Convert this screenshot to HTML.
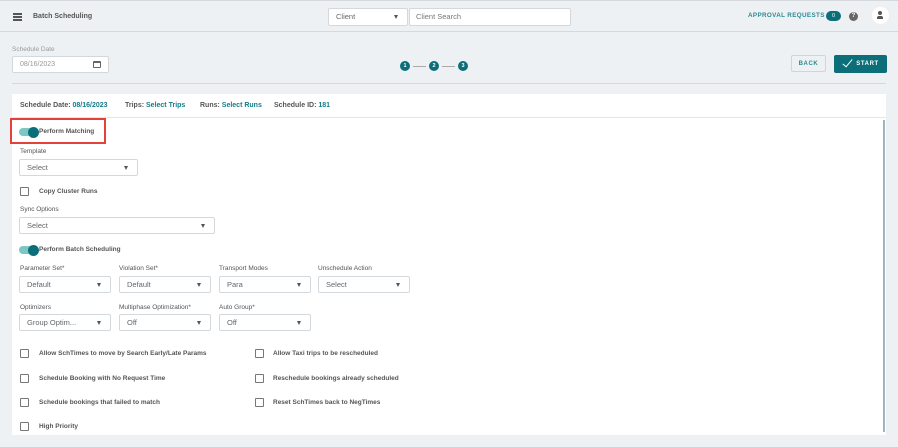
<!DOCTYPE html><html><head><style>
*{box-sizing:border-box;margin:0;padding:0}
body{width:898px;height:447px;background:#eef1f4;font-family:"Liberation Sans",sans-serif;position:relative;overflow:hidden;color:#444}
.a{position:absolute}
.t{font-size:7px;color:#555;font-weight:bold;white-space:nowrap}
.lbl{font-size:6.5px;color:#555;white-space:nowrap}
.sel{position:absolute;background:#fff;border:1px solid #d3d8dc;border-radius:2px;font-size:7.5px;color:#666;padding-left:7px;line-height:15px;height:17px}
.sel:after{content:"";position:absolute;right:9px;top:6px;border-left:2.5px solid transparent;border-right:2.5px solid transparent;border-top:4px solid #555}
.cb{position:absolute;width:9px;height:9px;border:1.3px solid #777;border-radius:1px;background:#fff}
.tg{position:absolute;width:19px;height:8px;border-radius:4px;background:#7cc6c4}
.tg:after{content:"";position:absolute;right:-1px;top:-1.5px;width:11px;height:11px;border-radius:50%;background:#0b6e79}
.teal{color:#127c89}
.step{position:absolute;width:10px;height:10px;border-radius:50%;background:#0b6e79;color:#fff;font-size:5.5px;font-weight:bold;text-align:center;line-height:10px}
.btn{position:absolute;display:flex;align-items:center;justify-content:center;font-size:6px;font-weight:bold;letter-spacing:.6px;border-radius:2px}
</style></head><body>
<div class="a" style="left:0;top:0;width:898px;height:1px;background:#d5d9dd"></div>
<div class="a" style="left:0;top:31px;width:898px;height:1px;background:#d5d9dd"></div>
<div class="a" style="left:13px;top:13px;width:9px;height:1.5px;background:#555;box-shadow:0 3px 0 #555,0 6px 0 #555"></div>
<div class="a t" style="left:33px;top:13px;color:#555">Batch Scheduling</div>
<div class="sel" style="left:328px;top:8px;width:80px;height:18px;line-height:16px">Client</div>
<div class="a" style="left:409px;top:8px;width:162px;height:18px;background:#fff;border:1px solid #d3d8dc;border-radius:2px;font-size:7.5px;color:#777;padding-left:6px;line-height:16px">Client Search</div>
<div class="a" style="left:748px;top:12px;font-size:6.3px;font-weight:bold;color:#2a8a92;letter-spacing:.35px">APPROVAL REQUESTS</div>
<div class="a" style="left:826px;top:11px;width:15px;height:10px;border-radius:5px;background:#0b6e79;color:#fff;font-size:5.5px;text-align:center;line-height:10px">0</div>
<div class="a" style="left:849px;top:12px;width:9px;height:9px;border-radius:50%;background:#666;color:#fff;font-size:6px;text-align:center;line-height:9px;font-weight:bold">?</div>
<div class="a" style="left:872px;top:7px;width:17px;height:17px;border-radius:50%;background:#fff"></div>
<div class="a" style="left:878px;top:11px;width:4px;height:4px;border-radius:50%;background:#555"></div>
<div class="a" style="left:877px;top:16px;width:6px;height:3px;border-radius:2px 2px 0 0;background:#555"></div>
<div class="a lbl" style="left:12px;top:46px;color:#999">Schedule Date</div>
<div class="a" style="left:12px;top:56px;width:97px;height:17px;background:#fff;border:1px solid #d3d8dc;border-radius:2px;font-size:7px;color:#999;padding-left:7px;line-height:15px">08/16/2023</div>
<div class="a" style="left:93px;top:61px;width:8px;height:7px;border:1.2px solid #666;border-top-width:2.5px;border-radius:1px"></div>
<div class="step" style="left:400px;top:61px">1</div>
<div class="a" style="left:413px;top:66px;width:13px;height:1px;background:#aaa"></div>
<div class="step" style="left:429px;top:61px">2</div>
<div class="a" style="left:442px;top:66px;width:13px;height:1px;background:#aaa"></div>
<div class="step" style="left:458px;top:61px">3</div>
<div class="btn" style="left:791px;top:55px;width:35px;height:17px;border:1px solid #cfd5d9;color:#2a8a92">BACK</div>
<div class="btn" style="left:834px;top:55px;width:53px;height:18px;background:#0b6e79;color:#fff;padding-left:14px">START</div>
<div class="a" style="left:845px;top:57px;width:5px;height:10px;border-right:1.3px solid #fff;border-bottom:1.3px solid #fff;transform:rotate(40deg)"></div>
<div class="a" style="left:12px;top:83px;width:874px;height:1px;background:#d5d9dd"></div>
<div class="a" style="left:12px;top:94px;width:874px;height:341px;background:#fff"></div>
<div class="a" style="left:12px;top:117px;width:874px;height:1px;background:#e3e7ea"></div>
<div class="a" style="left:883px;top:120px;width:2px;height:312px;background:#9fb6bf"></div>
<div class="a t" style="left:20px;top:102px">Schedule Date: <span class="teal">08/16/2023</span></div>
<div class="a t" style="left:125px;top:102px">Trips: <span class="teal">Select Trips</span></div>
<div class="a t" style="left:200px;top:102px">Runs: <span class="teal">Select Runs</span></div>
<div class="a t" style="left:274px;top:102px">Schedule ID: <span class="teal">181</span></div>
<div class="a" style="left:10px;top:118px;width:96px;height:26px;border:2px solid #e5413b"></div>
<div class="tg" style="left:19px;top:128px"></div>
<div class="a lbl" style="left:39px;top:128px;font-weight:bold">Perform Matching</div>
<div class="a lbl" style="left:20px;top:148px">Template</div>
<div class="sel" style="left:19px;top:159px;width:119px">Select</div>
<div class="cb" style="left:20px;top:187px"></div>
<div class="a lbl" style="left:39px;top:188px;font-weight:bold">Copy Cluster Runs</div>
<div class="a lbl" style="left:20px;top:206px">Sync Options</div>
<div class="sel" style="left:19px;top:217px;width:196px">Select</div>
<div class="tg" style="left:19px;top:246px"></div>
<div class="a lbl" style="left:39px;top:246px;font-weight:bold">Perform Batch Scheduling</div>
<div class="a lbl" style="left:20px;top:265px">Parameter Set*</div>
<div class="a lbl" style="left:119px;top:265px">Violation Set*</div>
<div class="a lbl" style="left:219px;top:265px">Transport Modes</div>
<div class="a lbl" style="left:318px;top:265px">Unschedule Action</div>
<div class="sel" style="left:19px;top:276px;width:92px">Default</div>
<div class="sel" style="left:119px;top:276px;width:92px">Default</div>
<div class="sel" style="left:219px;top:276px;width:92px">Para</div>
<div class="sel" style="left:318px;top:276px;width:92px">Select</div>
<div class="a lbl" style="left:20px;top:304px">Optimizers</div>
<div class="a lbl" style="left:119px;top:304px">Multiphase Optimization*</div>
<div class="a lbl" style="left:219px;top:304px">Auto Group*</div>
<div class="sel" style="left:19px;top:314px;width:92px">Group Optim...</div>
<div class="sel" style="left:119px;top:314px;width:92px">Off</div>
<div class="sel" style="left:219px;top:314px;width:92px">Off</div>
<div class="cb" style="left:20px;top:349px"></div><div class="a lbl" style="left:39px;top:350px;font-weight:bold">Allow SchTimes to move by Search Early/Late Params</div>
<div class="cb" style="left:255px;top:349px"></div><div class="a lbl" style="left:273px;top:350px;font-weight:bold">Allow Taxi trips to be rescheduled</div>
<div class="cb" style="left:20px;top:374px"></div><div class="a lbl" style="left:39px;top:375px;font-weight:bold">Schedule Booking with No Request Time</div>
<div class="cb" style="left:255px;top:374px"></div><div class="a lbl" style="left:273px;top:375px;font-weight:bold">Reschedule bookings already scheduled</div>
<div class="cb" style="left:20px;top:398px"></div><div class="a lbl" style="left:39px;top:399px;font-weight:bold">Schedule bookings that failed to match</div>
<div class="cb" style="left:255px;top:398px"></div><div class="a lbl" style="left:273px;top:399px;font-weight:bold">Reset SchTimes back to NegTimes</div>
<div class="cb" style="left:20px;top:422px"></div><div class="a lbl" style="left:39px;top:423px;font-weight:bold">High Priority</div>
</body></html>
